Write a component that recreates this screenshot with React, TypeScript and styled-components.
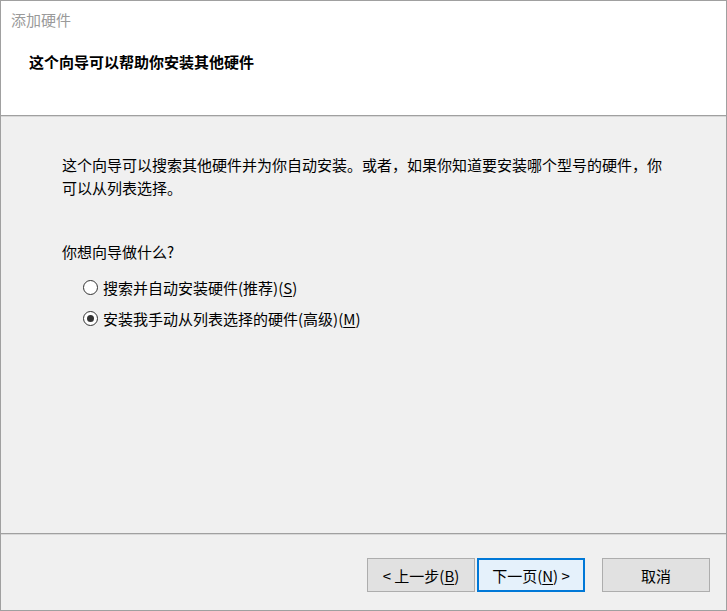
import React from "react";
import styled, { createGlobalStyle } from "styled-components";

const GlobalStyle = createGlobalStyle`
  html, body {
    margin: 0;
    padding: 0;
    background: #f0f0f0;
  }
  body {
    font-family: "Noto Sans CJK SC", "Microsoft YaHei", "Noto Sans", sans-serif;
    font-size: 15px;
    color: #000;
  }
`;

const Window = styled.div`
  box-sizing: border-box;
  width: 727px;
  height: 611px;
  border: 1px solid #a0a0a0;
  background: #f0f0f0;
  display: flex;
  flex-direction: column;
  overflow: hidden;
`;

const Header = styled.div`
  height: 114px;
  flex-shrink: 0;
  background: #fff;
  border-bottom: 1px solid #a0a0a0;
  box-shadow: 0 1px 0 #d8d8d8;
  display: flex;
  flex-direction: column;
  padding: 0 0 0 10px;
`;

const Caption = styled.div`
  color: #9a9a9a;
  line-height: 22px;
  margin-top: 8px;
`;

const Heading = styled.div`
  font-weight: 700;
  line-height: 22px;
  margin-top: 20px;
  padding-left: 18px;
`;

const Body = styled.div`
  flex: 1;
  padding: 37px 0 0 61px;
  display: flex;
  flex-direction: column;
`;

const Paragraph = styled.p`
  margin: 0;
  width: 608px;
  line-height: 23px;
`;

const Question = styled.div`
  margin-top: 41px;
  line-height: 23px;
`;

const Options = styled.div`
  margin-top: 13px;
  padding-left: 21px;
  display: flex;
  flex-direction: column;
  gap: 8px;
`;

const Option = styled.label`
  display: flex;
  align-items: center;
  gap: 5px;
  line-height: 23px;
`;

const Radio = styled.span<{ $checked?: boolean }>`
  box-sizing: border-box;
  width: 15px;
  height: 15px;
  border-radius: 50%;
  border: 1px solid #333;
  background: #fff;
  display: flex;
  align-items: center;
  justify-content: center;
  &::after {
    content: "";
    width: 7px;
    height: 7px;
    border-radius: 50%;
    background: ${(p) => (p.$checked ? "#333" : "transparent")};
  }
`;

const Key = styled.span`
  text-decoration: underline;
  text-underline-offset: 2px;
`;

const Footer = styled.div`
  box-sizing: border-box;
  height: 77px;
  flex-shrink: 0;
  border-top: 1px solid #a0a0a0;
  box-shadow: inset 0 1px 0 #d8d8d8;
  display: flex;
  align-items: flex-start;
  padding: 24px 0 0 366px;
`;

const Button = styled.button<{ $focused?: boolean; $gap?: number }>`
  box-sizing: border-box;
  width: 108px;
  height: 34px;
  margin-left: ${(p) => p.$gap ?? 0}px;
  font: inherit;
  color: #000;
  background: ${(p) => (p.$focused ? "#e5f1fb" : "#e1e1e1")};
  border: ${(p) => (p.$focused ? "2px solid #0078d7" : "1px solid #adadad")};
  padding: 0;
  display: flex;
  align-items: center;
  justify-content: center;
`;

export default function App() {
  return (
    <>
      <GlobalStyle />
      <Window>
        <Header>
          <Caption>添加硬件</Caption>
          <Heading>这个向导可以帮助你安装其他硬件</Heading>
        </Header>
        <Body>
          <Paragraph>
            这个向导可以搜索其他硬件并为你自动安装。或者，如果你知道要安装哪个型号的硬件，你可以从列表选择。
          </Paragraph>
          <Question>你想向导做什么?</Question>
          <Options>
            <Option>
              <Radio />
              <span>
                搜索并自动安装硬件(推荐)(<Key>S</Key>)
              </span>
            </Option>
            <Option>
              <Radio $checked />
              <span>
                安装我手动从列表选择的硬件(高级)(<Key>M</Key>)
              </span>
            </Option>
          </Options>
        </Body>
        <Footer>
          <Button>
            &lt; 上一步(<Key>B</Key>)
          </Button>
          <Button $focused $gap={2}>
            下一页(<Key>N</Key>) &gt;
          </Button>
          <Button $gap={17}>取消</Button>
        </Footer>
      </Window>
    </>
  );
}
